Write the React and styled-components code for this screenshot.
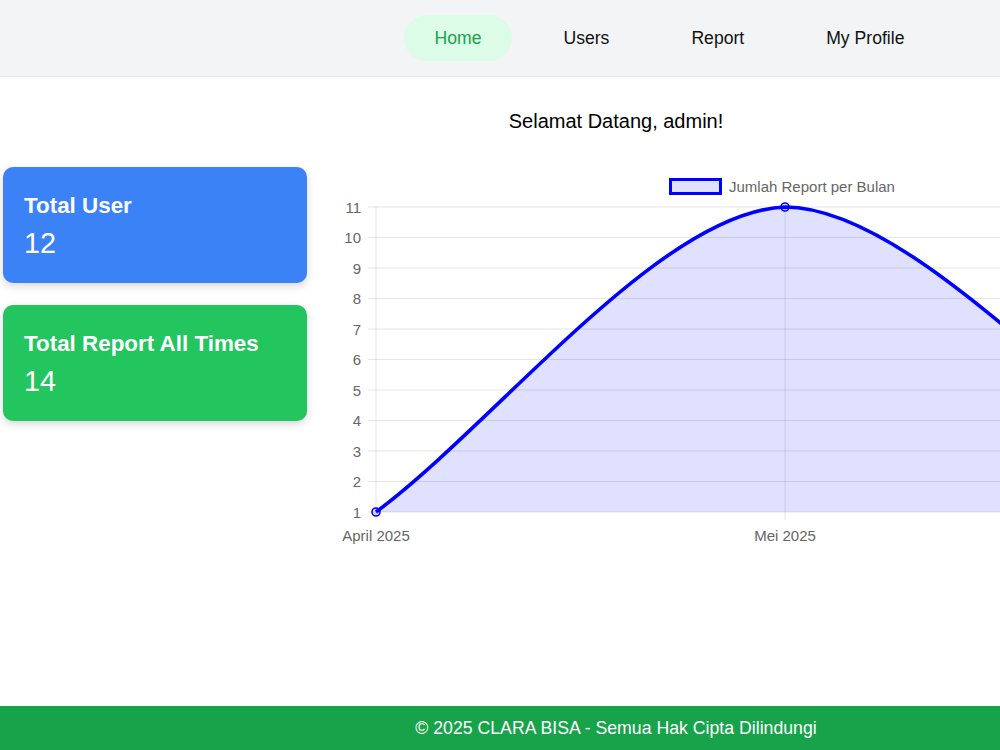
import styled, { createGlobalStyle } from "styled-components";

const GlobalStyle = createGlobalStyle`
  html,
  body {
    margin: 0;
    overflow: hidden;
  }

  body {
    font-family: "Liberation Sans", Arial, sans-serif;
    color: #111;
    background: #fff;
  }
`;

const Page = styled.div`
  width: 1232px;
  min-height: 100vh;
  display: flex;
  flex-direction: column;
`;

const Navbar = styled.nav`
  height: 76px;
  display: flex;
  align-items: center;
  padding-left: 404px;
  background: #f3f4f6;
  border-bottom: 1px solid #e5e7eb;
`;

const NavList = styled.ul`
  display: flex;
  gap: 21px;
  margin: 0;
  padding: 0;
  list-style: none;
`;

const NavLink = styled.a`
  display: block;
  height: 46px;
  padding: 0 30.5px;
  line-height: 46px;
  border-radius: 23px;
  font-size: 17.6px;
  text-decoration: none;
  color: ${(p) => (p.$active ? "#16a34a" : "#111")};
  background: ${(p) => (p.$active ? "#dcfce7" : "transparent")};
`;

const Main = styled.main`
  flex: 1;
  padding-top: 33px;
`;

const Greeting = styled.h2`
  margin: 0 0 34px;
  font-size: 20px;
  font-weight: 400;
  text-align: center;
  color: #000;
`;

const Row = styled.div`
  display: flex;
  align-items: flex-start;
  gap: 33px;
  padding: 0 4px 0 3px;
`;

const Cards = styled.div`
  width: 304px;
  flex-shrink: 0;
  display: flex;
  flex-direction: column;
  gap: 22px;
`;

const Card = styled.div`
  padding: 26px 20px 23px 21px;
  border-radius: 10px;
  color: #fff;
  background: ${(p) => p.$color};
  box-shadow: 0 3px 8px rgba(0, 0, 0, 0.16);
`;

const CardTitle = styled.h3`
  margin: 0 0 8px;
  font-size: 22.4px;
  font-weight: 700;
`;

const CardValue = styled.div`
  font-size: 28.8px;
`;

const ChartBox = styled.section`
  flex: 1;
`;

const ChartSvg = styled.svg`
  display: block;

  text {
    font-family: "Liberation Sans", Arial, sans-serif;
    font-size: 15px;
    fill: #666;
  }
`;

const Footer = styled.footer`
  padding: 11.5px 0;
  font-size: 17.7px;
  text-align: center;
  color: #fff;
  background: #16a34a;
`;

const months = ["April 2025", "Mei 2025", "Juni 2025"];
const reports = [1, 11, 2];
const area = { left: 36, right: 854, top: 40, bottom: 345 };
const yMin = 1;
const yMax = 11;

const xAt = (i) =>
  area.left + (i * (area.right - area.left)) / (reports.length - 1);
const yAt = (v) =>
  area.bottom - ((v - yMin) * (area.bottom - area.top)) / (yMax - yMin);

const clamp = (v, lo, hi) => Math.max(lo, Math.min(hi, v));

// same spline as chart.js line with tension
function controlPoints(pts, tension) {
  return pts.map((p, i) => {
    const prev = pts[i - 1] || p;
    const next = pts[i + 1] || p;
    const d01 = Math.hypot(p.x - prev.x, p.y - prev.y);
    const d12 = Math.hypot(next.x - p.x, next.y - p.y);
    const fa = tension * (d01 / (d01 + d12) || 0);
    const fb = tension * (d12 / (d01 + d12) || 0);
    return {
      prev: {
        x: clamp(p.x - fa * (next.x - prev.x), area.left, area.right),
        y: clamp(p.y - fa * (next.y - prev.y), area.top, area.bottom),
      },
      next: {
        x: clamp(p.x + fb * (next.x - prev.x), area.left, area.right),
        y: clamp(p.y + fb * (next.y - prev.y), area.top, area.bottom),
      },
    };
  });
}

function ReportChart() {
  const pts = reports.map((v, i) => ({ x: xAt(i), y: yAt(v) }));
  const cps = controlPoints(pts, 0.3);

  let line = `M${pts[0].x},${pts[0].y}`;
  for (let i = 1; i < pts.length; i++) {
    const a = cps[i - 1].next;
    const b = cps[i].prev;
    line += ` C${a.x},${a.y} ${b.x},${b.y} ${pts[i].x},${pts[i].y}`;
  }
  const fill = `${line} L${pts[pts.length - 1].x},${area.bottom} L${pts[0].x},${area.bottom} Z`;

  const ticks = [];
  for (let v = yMin; v <= yMax; v++) ticks.push(v);

  return (
    <ChartSvg width="888" height="385" viewBox="0 0 888 385">
      <rect
        x="330.5"
        y="12.5"
        width="50"
        height="14"
        fill="rgba(0,0,255,0.12)"
        stroke="#0000ff"
        strokeWidth="3"
      />
      <text x="389" y="24.5">
        Jumlah Report per Bulan
      </text>

      {ticks.map((v) => (
        <g key={v}>
          <line
            x1={area.left - 8}
            x2={area.right}
            y1={yAt(v)}
            y2={yAt(v)}
            stroke="rgba(0,0,0,0.1)"
          />
          <text x="21" y={yAt(v) + 5.5} textAnchor="end">
            {v}
          </text>
        </g>
      ))}

      {months.map((m, i) => (
        <g key={m}>
          <line
            x1={xAt(i)}
            x2={xAt(i)}
            y1={area.top}
            y2={area.bottom + 8}
            stroke="rgba(0,0,0,0.1)"
          />
          <text x={xAt(i)} y="373.5" textAnchor="middle">
            {m}
          </text>
        </g>
      ))}

      <path d={fill} fill="rgba(0,0,255,0.12)" />
      <path d={line} fill="none" stroke="#0000ff" strokeWidth="3.6" />
      {pts.map((p, i) => (
        <circle
          key={i}
          cx={p.x}
          cy={p.y}
          r="4"
          fill="rgba(0,0,255,0.12)"
          stroke="#0000ff"
          strokeWidth="1.6"
        />
      ))}
    </ChartSvg>
  );
}

const links = ["Home", "Users", "Report", "My Profile"];

export default function App() {
  return (
    <Page>
      <GlobalStyle />
      <Navbar>
        <NavList>
          {links.map((l) => (
            <li key={l}>
              <NavLink href="#" $active={l === "Home"}>
                {l}
              </NavLink>
            </li>
          ))}
        </NavList>
      </Navbar>

      <Main>
        <Greeting>Selamat Datang, admin!</Greeting>
        <Row>
          <Cards>
            <Card $color="#3b82f6">
              <CardTitle>Total User</CardTitle>
              <CardValue>12</CardValue>
            </Card>
            <Card $color="#22c55e">
              <CardTitle>Total Report All Times</CardTitle>
              <CardValue>14</CardValue>
            </Card>
          </Cards>
          <ChartBox>
            <ReportChart />
          </ChartBox>
        </Row>
      </Main>

      <Footer>© 2025 CLARA BISA - Semua Hak Cipta Dilindungi</Footer>
    </Page>
  );
}
